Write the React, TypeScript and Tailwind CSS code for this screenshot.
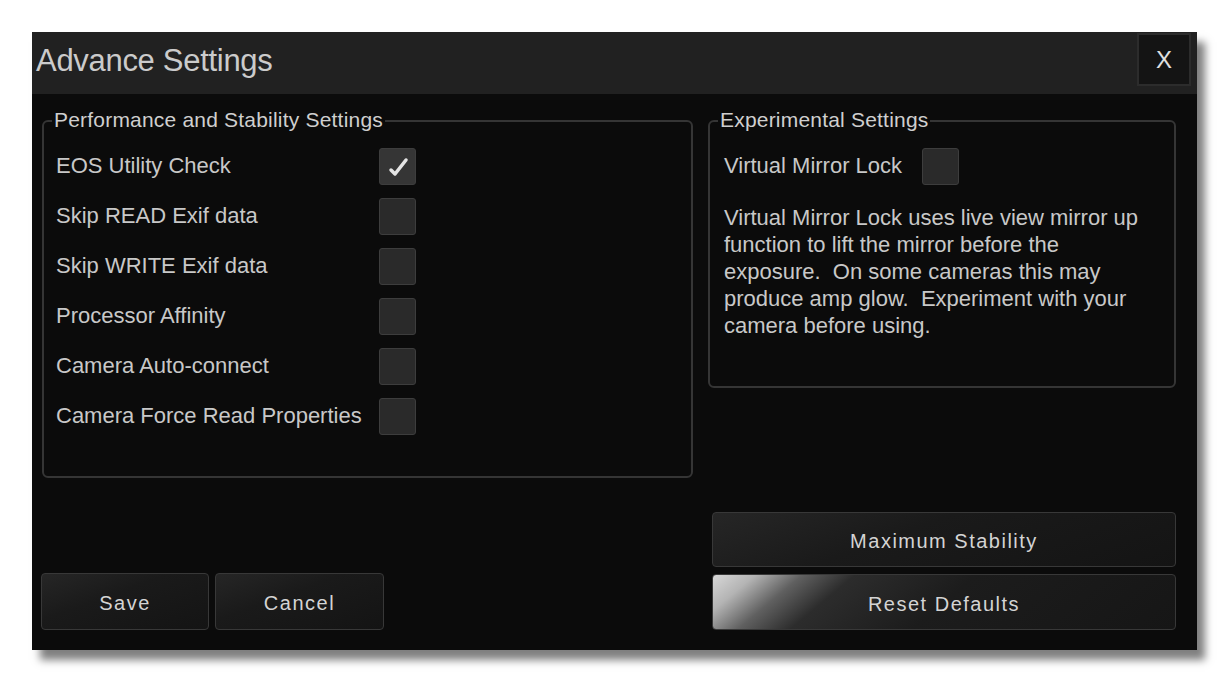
import React from "react";

const FONT = { fontFamily: '"Liberation Sans", Arial, sans-serif' };

function Checkbox({ checked = false }: { checked?: boolean }) {
  return (
    <div
      className={`w-[37px] h-[37px] rounded-[3px] border border-[#3d3d3d] flex items-center justify-center ${
        checked ? "bg-[#353535]" : "bg-[#2a2a2a]"
      }`}
    >
      {checked && (
        <svg width="28" height="28" viewBox="0 0 28 28">
          <path
            d="M7 18 L11 22 L22 8"
            fill="none"
            stroke="#e4e4e4"
            strokeWidth="3.5"
            strokeLinecap="round"
            strokeLinejoin="round"
          />
        </svg>
      )}
    </div>
  );
}

function GroupBox({
  title,
  className,
  children,
}: {
  title: string;
  className: string;
  children: React.ReactNode;
}) {
  return (
    <div className={`relative border-2 border-[#353535] rounded-[6px] ${className}`}>
      <div className="absolute left-[8px] -top-[14px] px-[2px] bg-[#0b0b0b] text-[21px] leading-[24px] text-[#cfcfcf] tracking-[0.2px]">
        {title}
      </div>
      {children}
    </div>
  );
}

function Btn({
  label,
  className,
  reset = false,
}: {
  label: string;
  className: string;
  reset?: boolean;
}) {
  return (
    <div
      className={`flex items-center justify-center pt-[3px] rounded-[4px] border border-[#383838] text-[20px] tracking-[1.5px] text-[#d4d4d4] ${
        reset
          ? "bg-[linear-gradient(140deg,#d8d8d8_0%,#b4b4b4_8%,#606060_17%,#2c2c2c_27%,#1c1c1c_50%,#161616_100%)]"
          : "bg-[linear-gradient(160deg,#262626_0%,#1a1a1a_40%,#141414_100%)]"
      } ${className}`}
    >
      {label}
    </div>
  );
}

export default function App() {
  const rows: [string, boolean][] = [
    ["EOS Utility Check", true],
    ["Skip READ Exif data", false],
    ["Skip WRITE Exif data", false],
    ["Processor Affinity", false],
    ["Camera Auto-connect", false],
    ["Camera Force Read Properties", false],
  ];

  const desc = [
    "Virtual Mirror Lock uses live view mirror up",
    "function to lift the mirror before the",
    "exposure.  On some cameras this may",
    "produce amp glow.  Experiment with your",
    "camera before using.",
  ];

  return (
    <div className="w-full h-[685px] bg-white pt-[32px] pl-[32px]" style={FONT}>
      <div className="w-[1165px] h-[618px] flex flex-col bg-[#0b0b0b] shadow-[8px_10px_8px_rgba(0,0,0,0.5)]">
        {/* Title bar */}
        <div className="h-[62px] bg-[#212121] flex items-start justify-between">
          <div className="pl-[4px] pt-[9px] text-[31px] leading-[40px] tracking-[-0.3px] text-[#cbcbcb]">
            Advance Settings
          </div>
          <div className="mt-[1px] mr-[6px] w-[54px] h-[53px] border-2 border-[#2c2c2c] bg-[#141414] flex items-center justify-center text-[24px] text-[#e0e0e0]">
            X
          </div>
        </div>

        {/* Body */}
        <div className="flex-1 flex pl-[10px] pr-[21px] pt-[26px] pb-[20px]">
          {/* Left column */}
          <div className="w-[651px] flex flex-col justify-between">
            <GroupBox title="Performance and Stability Settings" className="h-[358px] pt-[19px] pl-[12px]">
              {rows.map(([label, checked]) => (
                <div key={label} className="h-[50px] flex items-center">
                  <div className="w-[323px] text-[22px] text-[#c8c8c8] leading-[26px]">{label}</div>
                  <Checkbox checked={checked} />
                </div>
              ))}
            </GroupBox>
            <div className="flex gap-[6px] -ml-[1px]">
              <Btn label="Save" className="w-[168px] h-[57px]" />
              <Btn label="Cancel" className="w-[169px] h-[57px]" />
            </div>
          </div>

          {/* Right column */}
          <div className="w-[468px] ml-[15px] flex flex-col">
            <GroupBox title="Experimental Settings" className="h-[268px] pt-[19px] pl-[14px]">
              <div className="h-[50px] flex items-center">
                <div className="w-[198px] text-[22px] text-[#c8c8c8] leading-[26px]">Virtual Mirror Lock</div>
                <Checkbox />
              </div>
              <div className="mt-[13px] flex flex-col text-[22px] leading-[27px] text-[#c8c8c8] whitespace-pre">
                {desc.map((line) => (
                  <div key={line}>{line}</div>
                ))}
              </div>
            </GroupBox>
            <div className="mt-auto pl-[4px] flex flex-col gap-[7px]">
              <Btn label="Maximum Stability" className="w-[464px] h-[55px]" />
              <Btn label="Reset Defaults" className="w-[464px] h-[56px]" reset />
            </div>
          </div>
        </div>
      </div>
    </div>
  );
}
